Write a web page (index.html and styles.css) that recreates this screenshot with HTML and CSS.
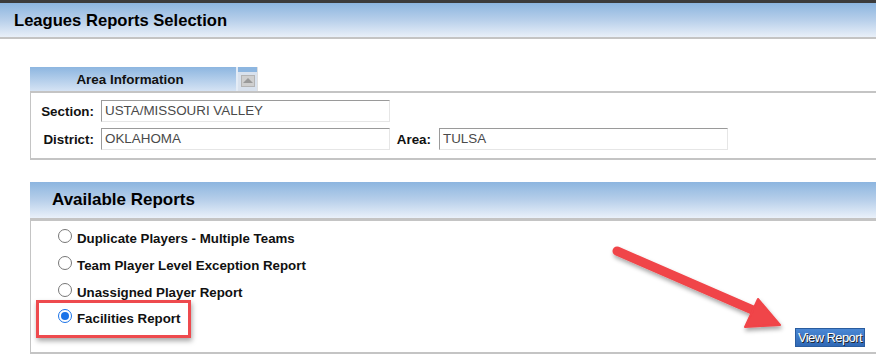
FILE: index.html
```html
<!DOCTYPE html>
<html>
<head>
<meta charset="utf-8">
<link rel="stylesheet" href="styles.css">
</head>
<body>
<div class="topbar"></div>
<div class="pagehead"><h1 class="pagetitle">Leagues Reports Selection</h1></div>
<div class="content">
  <div class="area">
    <div class="tabrow">
      <div class="tab">Area Information</div>
      <div class="tabicon"><span class="iconbox"><span class="tri"></span></span></div>
    </div>
    <div class="areapanel">
      <div class="fieldrow">
        <label class="lbl lbl-first">Section:</label>
        <div class="inp">USTA/MISSOURI VALLEY</div>
      </div>
      <div class="fieldrow">
        <label class="lbl lbl-first">District:</label>
        <div class="inp">OKLAHOMA</div>
        <label class="lbl lbl-area">Area:</label>
        <div class="inp">TULSA</div>
      </div>
    </div>
  </div>

  <div class="reports">
    <div class="rephead"><h2 class="reptitle">Available Reports</h2></div>
    <div class="reppanel">
      <div class="options">
        <label class="opt"><span class="radio"></span>Duplicate Players - Multiple Teams</label>
        <label class="opt"><span class="radio"></span>Team Player Level Exception Report</label>
        <label class="opt"><span class="radio"></span>Unassigned Player Report</label>
        <label class="opt"><span class="radio radio-on"><span class="dot"></span></span>Facilities Report</label>
      </div>
      <div class="btnrow"><button class="viewbtn">View Report</button></div>
    </div>
  </div>
</div>

<div class="highlight"></div>
<svg class="arrow" width="876" height="361" viewBox="0 0 876 361">
  <defs>
    <filter id="sh" x="-20%" y="-20%" width="140%" height="140%">
      <feDropShadow dx="1" dy="3" stdDeviation="2" flood-color="#000" flood-opacity="0.35"/>
    </filter>
  </defs>
  <g filter="url(#sh)">
    <line x1="617" y1="251" x2="755" y2="311" stroke="#f04448" stroke-width="9" stroke-linecap="round"/>
    <polygon points="758,299 780,325 745,327" fill="#f04448" stroke="#f04448" stroke-width="2" stroke-linejoin="round"/>
  </g>
</svg>
</body>
</html>
```

FILE: styles.css
```css
* { box-sizing: border-box; }
html, body { margin: 0; padding: 0; background: #fff; }
body {
  font-family: "Liberation Sans", Arial, sans-serif;
  width: 876px;
  height: 361px;
  overflow: hidden;
  position: relative;
}
.topbar { height: 3px; background: #3b3b3b; }
.pagehead {
  height: 36px;
  background: linear-gradient(to bottom, #8cb5df 0%, #b7cfea 50%, #e9f0f9 100%);
  border-bottom: 2px solid #c4c4c4;
  display: flex;
  align-items: center;
  padding-left: 14px;
  padding-top: 1px;
}
.pagetitle { margin: 0; font-size: 16.6px; font-weight: bold; color: #000; }
.content { padding: 28px 0 0 30px; }

.tabrow { display: flex; height: 24px; }
.tab {
  width: 208px;
  background: linear-gradient(to bottom, #8db6e0, #d5e3f4);
  font-size: 13.4px; font-weight: bold; color: #111;
  display: flex; align-items: center; justify-content: center;
  padding-right: 6px;
  border-right: 2px solid #e4ecf6;
}
.tabicon {
  width: 20px;
  background: linear-gradient(to bottom, #8db6e0 0%, #8db6e0 20%, #d9e2ee 20%, #d9e2ee 100%);
  display: flex; align-items: center; justify-content: center;
  border-right: 1px solid #e0e0e0;
}
.iconbox {
  width: 14px; height: 12px;
  border: 1px solid #b4b4b4;
  background: #cfcfcf;
  display: flex; align-items: center; justify-content: center;
  margin-top: 3px;
}
.tri {
  width: 0; height: 0;
  border-left: 5px solid transparent;
  border-right: 5px solid transparent;
  border-bottom: 5px solid #9a9a9a;
}
.areapanel {
  border-top: 2px solid #c4c4c4;
  border-left: 1px solid #c4c4c4;
  border-bottom: 2px solid #c4c4c4;
  padding: 7px 0 8px 0;
  display: flex; flex-direction: column; gap: 6px;
}
.fieldrow { display: flex; align-items: center; height: 22px; }
.lbl { font-size: 13.4px; font-weight: bold; color: #111; text-align: right; }
.lbl-first { width: 70px; padding-right: 7px; }
.lbl-area { width: 49px; padding-right: 8px; }
.inp {
  width: 289px; height: 22px;
  border: 1px solid #e6e6e6;
  border-top-color: #9a9a9a;
  border-left-color: #9a9a9a;
  font-size: 13.4px; color: #4a4a4a;
  padding: 2px 3px;
  line-height: 16px;
}

.reports { margin-top: 22px; }
.rephead {
  height: 39px;
  background: linear-gradient(to bottom, #8cb5df 0%, #b7cfea 50%, #eaf1fa 100%);
  border-bottom: 3px solid #c4c4c4;
  display: flex; align-items: center;
  padding-left: 22px;
}
.reptitle { margin: 0; font-size: 17px; font-weight: bold; color: #000; }
.reppanel {
  border-left: 1px solid #c4c4c4;
  border-bottom: 2px solid #c4c4c4;
  height: 133px;
  display: flex; flex-direction: column; justify-content: space-between;
  padding: 9px 11px 5px 27px;
}
.options { display: flex; flex-direction: column; gap: 10.4px; }
.opt {
  display: flex; align-items: center; height: 16.5px;
  font-size: 13.3px; font-weight: bold; color: #111;
}
.radio {
  width: 14px; height: 14px;
  border: 1px solid #777;
  border-radius: 50%;
  margin-right: 5px;
  margin-top: -5px;
  background: #fff;
  display: flex; align-items: center; justify-content: center;
}
.radio-on { border: 1px solid #1a73e8; }
.dot { width: 8px; height: 8px; border-radius: 50%; background: #1a73e8; }
.btnrow { display: flex; justify-content: flex-end; }
.viewbtn {
  width: 70px; height: 19px;
  background: linear-gradient(to bottom, #4a87d4, #2f68b5);
  border: 1px solid #2a5c9e;
  color: #fff;
  font-family: "Liberation Sans", Arial, sans-serif;
  font-size: 13px;
  padding: 0;
  text-shadow: 1px 1px 0 #222;
  letter-spacing: -0.6px;
  white-space: nowrap;
}

.highlight {
  position: absolute;
  left: 36px; top: 300px;
  width: 155px; height: 38px;
  border: 3px solid #ee4a4e;
  box-shadow: 1px 3px 5px rgba(0,0,0,0.35);
}
.arrow { position: absolute; left: 0; top: 0; pointer-events: none; }
```
